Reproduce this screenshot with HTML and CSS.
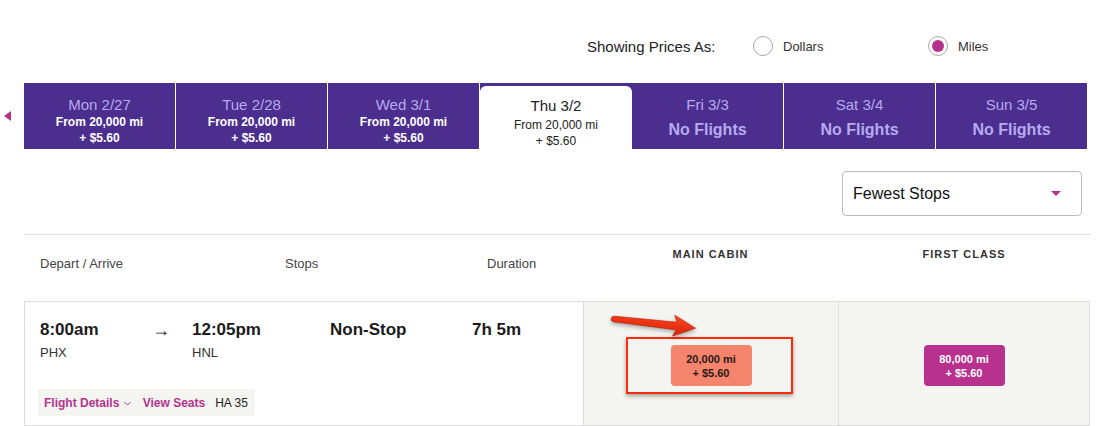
FILE: index.html
```html
<!DOCTYPE html>
<html lang="en">
<head>
  <meta charset="UTF-8">
  <meta name="viewport" content="width=device-width, initial-scale=1.0">
  <title>Select Flight</title>
  <link rel="stylesheet" href="styles.css">
</head>
<body>
  <div class="price-toggle">
    <div class="toggle-label">Showing Prices As:</div>
    <label class="option"><span class="radio"></span>Dollars</label>
    <label class="option"><span class="radio checked"></span>Miles</label>
  </div>

  <div class="dates">
    <div class="prev"><span class="prev-arrow"></span></div>
    <div class="tab">
      <div class="day">Mon 2/27</div>
      <div class="from">From 20,000 mi</div>
      <div class="from">+ $5.60</div>
    </div>
    <div class="tab">
      <div class="day">Tue 2/28</div>
      <div class="from">From 20,000 mi</div>
      <div class="from">+ $5.60</div>
    </div>
    <div class="tab">
      <div class="day">Wed 3/1</div>
      <div class="from">From 20,000 mi</div>
      <div class="from">+ $5.60</div>
    </div>
    <div class="tab selected">
      <div class="card">
        <div class="day">Thu 3/2</div>
        <div class="from first">From 20,000 mi</div>
        <div class="from">+ $5.60</div>
      </div>
    </div>
    <div class="tab">
      <div class="day">Fri 3/3</div>
      <div class="none">No Flights</div>
    </div>
    <div class="tab">
      <div class="day">Sat 3/4</div>
      <div class="none">No Flights</div>
    </div>
    <div class="tab">
      <div class="day">Sun 3/5</div>
      <div class="none">No Flights</div>
    </div>
  </div>

  <div class="sort-row">
    <div class="sort">
      <span>Fewest Stops</span>
      <span class="caret"></span>
    </div>
  </div>

  <div class="results">
    <div class="head">
      <div class="head-info">
        <div class="h-depart">Depart / Arrive</div>
        <div class="h-stops">Stops</div>
        <div class="h-duration">Duration</div>
      </div>
      <div class="cabin">MAIN CABIN</div>
      <div class="cabin last">FIRST CLASS</div>
    </div>

    <div class="flight">
      <div class="info">
        <div class="times">
          <div class="depart">
            <div class="time">8:00am</div>
            <div class="code">PHX</div>
          </div>
          <div class="to">&rarr;</div>
          <div class="arrive">
            <div class="time">12:05pm</div>
            <div class="code">HNL</div>
          </div>
          <div class="stops">Non-Stop</div>
          <div class="duration">7h 5m</div>
        </div>
        <div class="links">
          <span class="link">Flight Details
            <svg class="chev" width="7" height="5" viewBox="0 0 7 5"><path d="M0.5,1 L3.5,4 L6.5,1" fill="none" stroke="#b5338f" stroke-width="1"/></svg>
          </span>
          <span class="link">View Seats</span>
          <span class="flight-no">HA 35</span>
        </div>
      </div>
      <div class="fare main">
        <div class="price coral">20,000 mi<br>+ $5.60</div>
        <div class="callout"></div>
        <svg class="pointer" width="130" height="50" viewBox="0 0 130 50">
          <defs>
            <linearGradient id="red" x1="0" y1="0" x2="0" y2="1">
              <stop offset="0" stop-color="#ff4a22"/>
              <stop offset="1" stop-color="#d81e06"/>
            </linearGradient>
          </defs>
          <g transform="translate(30 17) rotate(6.4)">
            <path d="M0,-2.8 L63,-3.8 L60,-10.5 L82,0 L60,10.5 L63,3.8 L0,2.8 A2.8,2.8 0 0 1 0,-2.8 Z" fill="url(#red)" stroke="#b81a05" stroke-width="0.6"/>
          </g>
        </svg>
      </div>
      <div class="fare last">
        <div class="price magenta">80,000 mi<br>+ $5.60</div>
      </div>
    </div>
  </div>
</body>
</html>
```

FILE: styles.css
```css
body {
  margin: 0;
  font-family: "Liberation Sans", Arial, sans-serif;
  color: #222;
  background: #fff;
}

/* price mode toggle */
.price-toggle {
  display: flex;
  align-items: center;
  height: 20px;
  padding: 36px 0 0 587px;
}
.toggle-label {
  font-size: 15px;
  color: #222;
  width: 166px;
}
.option {
  display: flex;
  align-items: center;
  width: 175px;
  font-size: 13px;
  color: #333;
}
.radio {
  box-sizing: border-box;
  width: 20px;
  height: 20px;
  border: 1px solid #a8a8a8;
  border-radius: 50%;
  margin-right: 10px;
  background: #fff;
  position: relative;
}
.radio.checked::after {
  content: "";
  position: absolute;
  left: 3px;
  top: 3px;
  width: 12px;
  height: 12px;
  border-radius: 50%;
  background: #b5338f;
}

/* date tabs */
.dates {
  display: flex;
  align-items: flex-end;
  height: 66px;
  margin-top: 27px;
}
.prev {
  width: 24px;
  height: 66px;
  display: flex;
  align-items: center;
  padding-left: 4px;
  box-sizing: border-box;
}
.prev-arrow {
  width: 0;
  height: 0;
  border-top: 5px solid transparent;
  border-bottom: 5px solid transparent;
  border-right: 7px solid #b5338f;
}
.tab {
  box-sizing: border-box;
  width: 151px;
  height: 66px;
  margin-right: 1px;
  padding-top: 13px;
  background: #4b2e8d;
  text-align: center;
}
.day {
  font-size: 15px;
  line-height: 18px;
  color: #b6aaf0;
}
.from {
  font-size: 12px;
  line-height: 16px;
  font-weight: bold;
  color: #fff;
}
.none {
  margin-top: 6px;
  font-size: 16px;
  line-height: 20px;
  font-weight: bold;
  color: #b6aaf0;
}
.tab.selected {
  padding: 3px 0 0;
  margin-right: 0;
  width: 152px;
}
.card {
  height: 63px;
  box-sizing: border-box;
  padding-top: 11px;
  background: #fff;
  border-radius: 6px 6px 0 0;
}
.card .day {
  color: #222;
}
.card .from {
  font-weight: normal;
  color: #222;
}
.card .from.first {
  margin-top: 2px;
}

/* sort dropdown */
.sort-row {
  display: flex;
  justify-content: flex-end;
  padding: 22px 26px 18px 0;
}
.sort {
  box-sizing: border-box;
  width: 240px;
  height: 45px;
  border: 1px solid #bbb;
  border-radius: 4px;
  display: flex;
  align-items: center;
  justify-content: space-between;
  padding: 0 20px 0 10px;
  font-size: 16px;
  color: #111;
}
.caret {
  width: 0;
  height: 0;
  border-left: 5px solid transparent;
  border-right: 5px solid transparent;
  border-top: 5px solid #b5338f;
}

/* results table */
.results {
  margin: 0 18px 0 24px;
  border-top: 1px solid #ddd;
}
.head {
  display: flex;
  height: 66px;
}
.head-info {
  width: 559px;
  flex-shrink: 0;
  display: flex;
  padding: 21px 0 0 16px;
  box-sizing: border-box;
  font-size: 13px;
  color: #444;
}
.h-depart {
  width: 245px;
}
.h-stops {
  width: 202px;
}
.cabin {
  width: 255px;
  flex-shrink: 0;
  text-align: center;
  padding-top: 13px;
  font-size: 11px;
  font-weight: bold;
  letter-spacing: 1px;
  color: #333;
}
.cabin.last {
  flex: 1;
  width: auto;
}

.flight {
  display: flex;
  height: 125px;
  box-sizing: border-box;
  border: 1px solid #ddd;
}
.info {
  width: 558px;
  flex-shrink: 0;
  padding: 17px 0 0 15px;
  box-sizing: border-box;
}
.times {
  display: flex;
  height: 70px;
}
.time {
  font-size: 17px;
  line-height: 22px;
  font-weight: bold;
  color: #1b1b1b;
}
.code {
  font-size: 13px;
  line-height: 24px;
  color: #333;
}
.depart {
  width: 112px;
}
.to {
  width: 40px;
  font-size: 18px;
  line-height: 22px;
  font-weight: bold;
  color: #222;
}
.arrive {
  width: 138px;
}
.stops,
.duration {
  font-size: 17px;
  line-height: 22px;
  font-weight: bold;
  color: #1b1b1b;
}
.stops {
  width: 142px;
}
.links {
  display: inline-flex;
  align-items: center;
  gap: 12px;
  height: 27px;
  margin-left: -2px;
  padding: 0 7px 0 6px;
  background: #f4f4f0;
  font-size: 12px;
}
.link {
  font-weight: bold;
  color: #b5338f;
}
.chev {
  margin-left: 1px;
  vertical-align: 1px;
}
.flight-no {
  margin-left: -2px;
  color: #222;
}

.fare {
  width: 255px;
  flex-shrink: 0;
  box-sizing: border-box;
  background: #f4f4f0;
  border-left: 1px dotted #ccc;
  display: flex;
  justify-content: center;
  align-items: center;
  position: relative;
}
.fare.main {
  border-left: 1px solid #ddd;
}
.fare.last {
  flex: 1;
  width: auto;
}
.price {
  width: 81px;
  height: 41px;
  box-sizing: border-box;
  padding-top: 7px;
  border-radius: 4px;
  text-align: center;
  font-size: 11px;
  line-height: 14px;
  font-weight: bold;
  margin-top: 4px;
}
.coral {
  background: #f5846d;
  color: #2a1a16;
}
.magenta {
  background: #b8318f;
  color: #fff;
}
.callout {
  position: absolute;
  left: 42px;
  top: 35px;
  width: 167px;
  height: 57px;
  box-sizing: border-box;
  border: 2px solid #ff2a0a;
  box-shadow: 0 2px 4px rgba(0, 0, 0, 0.35);
}
.pointer {
  position: absolute;
  left: 0;
  top: 0;
  filter: drop-shadow(0 2px 2px rgba(0, 0, 0, 0.35));
}
```
